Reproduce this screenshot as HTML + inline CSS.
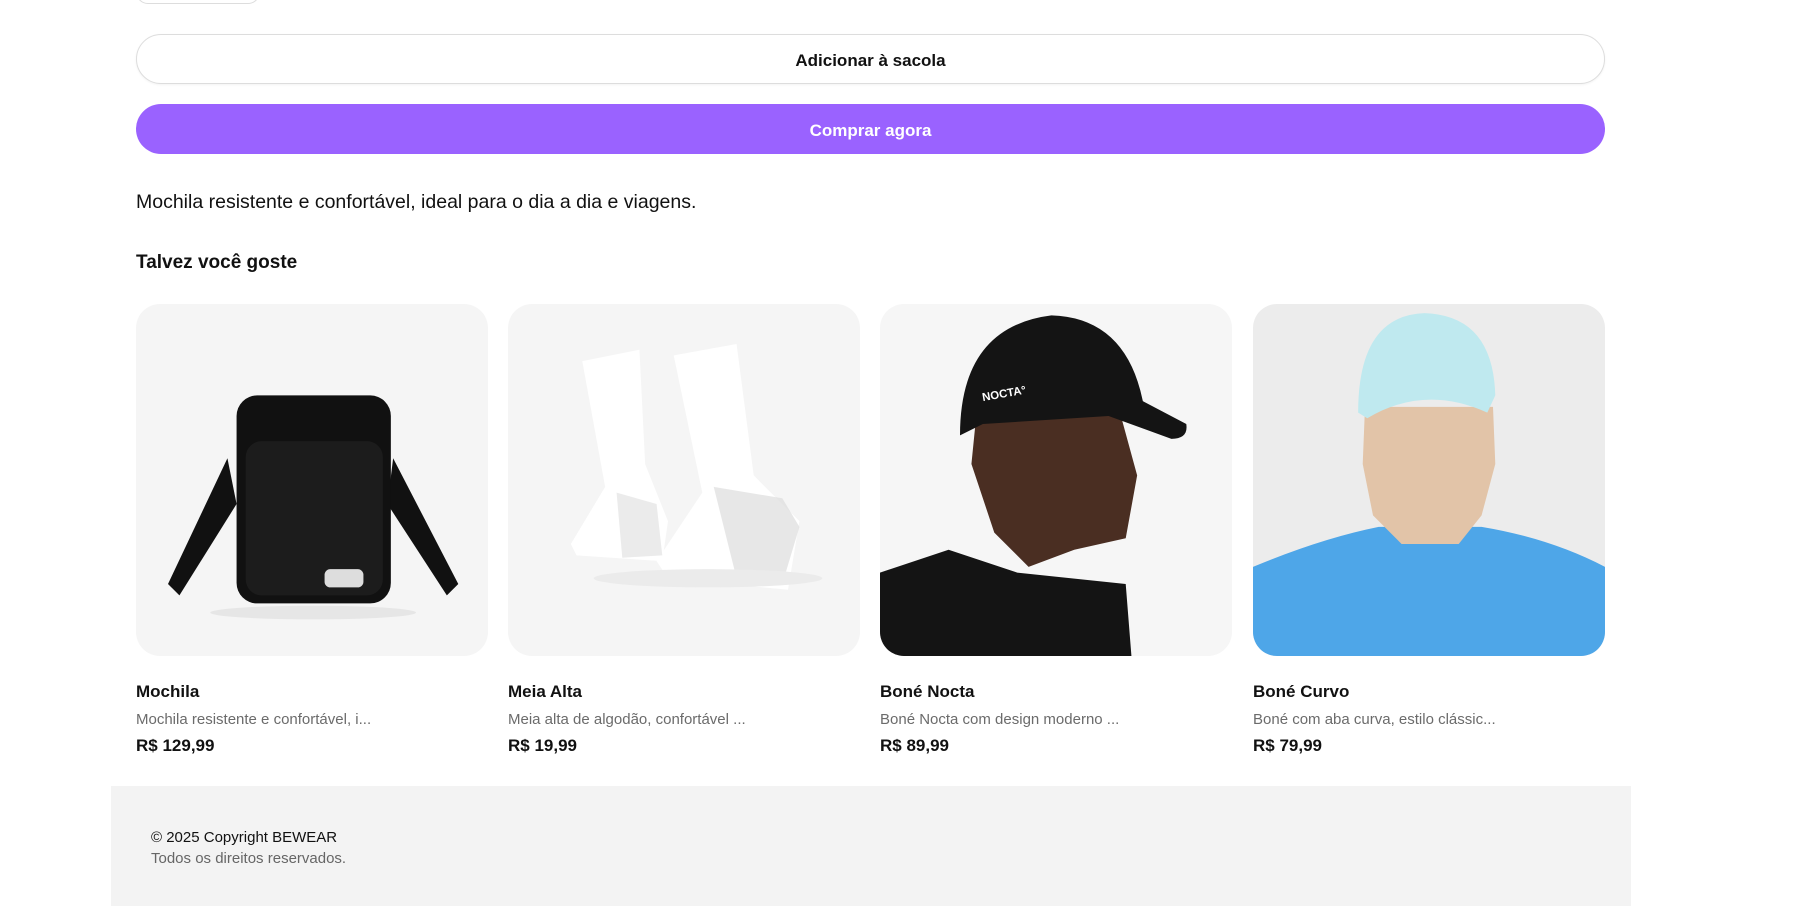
<!DOCTYPE html>
<html><head><meta charset="utf-8"><style>
*{box-sizing:border-box;margin:0;padding:0}
body{width:1793px;height:902px;overflow:hidden;background:#fff;font-family:"Liberation Sans",sans-serif;color:#111;position:relative}
.tiny{position:absolute;left:136px;top:-20px;width:124px;height:24px;border:1px solid #ddd;border-radius:12px}
.btn{position:absolute;left:136px;width:1469px;height:50px;border-radius:25px;display:flex;align-items:center;justify-content:center;font-size:17px;font-weight:bold;padding-top:4px}
.b1{top:34px;border:1px solid #ddd;background:#fff;color:#111;box-shadow:0 1px 2px rgba(0,0,0,.05)}
.b2{top:104px;background:#9a62ff;color:#fff}
.desc{position:absolute;left:136px;top:191px;font-size:19.5px}
.h{position:absolute;left:136px;top:252px;font-size:19px;font-weight:bold}
.card{position:absolute;top:304px;width:352px}
.img{width:352px;height:352px;border-radius:24px;overflow:hidden;background:#f5f5f5}
.img svg{display:block;width:352px;height:352px}
.t{margin-top:26px;font-size:17px;font-weight:bold}
.d{margin-top:9px;font-size:15px;color:#6b6b6b}
.p{margin-top:8px;font-size:17px;font-weight:bold}
.foot{position:absolute;left:111px;top:786px;width:1520px;height:120px;background:#f3f3f3}
.f1{position:absolute;left:40px;top:43px;font-size:15px}
.f2{position:absolute;left:40px;top:64px;font-size:15px;color:#666}
</style></head><body>
<div class="tiny"></div>
<div class="btn b1">Adicionar à sacola</div>
<div class="btn b2">Comprar agora</div>
<div class="desc">Mochila resistente e confortável, ideal para o dia a dia e viagens.</div>
<div class="h">Talvez você goste</div>

<div class="card" style="left:136px"><div class="img"><svg viewBox="0 0 308 308">
<path d="M80 135 L28 245 L38 255 L88 175 Z" fill="#111"/><path d="M225 135 L282 245 L272 255 L220 175 Z" fill="#111"/>
<rect x="88" y="80" width="135" height="182" rx="18" fill="#111"/><rect x="96" y="120" width="120" height="135" rx="14" fill="#1c1c1c"/>
<rect x="165" y="232" width="34" height="16" rx="5" fill="#ddd"/><ellipse cx="155" cy="270" rx="90" ry="6" fill="#e6e6e6"/>
</svg></div><div class="t">Mochila</div><div class="d">Mochila resistente e confortável, i...</div><div class="p">R$ 129,99</div></div>

<div class="card" style="left:508px"><div class="img"><svg viewBox="0 0 308 308">
<path d="M65 50 L115 40 L120 140 L140 190 L135 225 L60 220 L55 210 L85 160 Z" fill="#fff"/>
<path d="M145 45 L200 35 L215 150 L255 190 L245 250 L140 240 L130 225 L170 165 Z" fill="#fff"/>
<path d="M180 160 L240 170 L255 195 L240 245 L200 240 Z" fill="#ddd" opacity=".7"/>
<path d="M95 165 L130 175 L135 220 L100 222 Z" fill="#ddd" opacity=".6"/>
<ellipse cx="175" cy="240" rx="100" ry="8" fill="#ebebeb"/>
</svg></div><div class="t">Meia Alta</div><div class="d">Meia alta de algodão, confortável ...</div><div class="p">R$ 19,99</div></div>

<div class="card" style="left:880px"><div class="img" style="background:#f6f6f6"><svg viewBox="0 0 308 308">
<path d="M0 235 L60 215 L120 235 L215 245 L220 308 L0 308 Z" fill="#141414"/>
<path d="M85 90 L210 95 L225 150 L215 205 L170 215 L130 230 L100 200 L80 140 Z" fill="#4a2e22"/>
<path d="M70 115 Q70 20 150 10 Q215 12 230 85 L268 105 Q270 118 255 118 L200 98 L90 105 Z" fill="#141414"/>
<text x="90" y="85" font-size="10" fill="#fff" font-weight="bold" transform="rotate(-10 90 85)" font-family="Liberation Sans">NOCTA°</text>
</svg></div><div class="t">Boné Nocta</div><div class="d">Boné Nocta com design moderno ...</div><div class="p">R$ 89,99</div></div>

<div class="card" style="left:1253px"><div class="img" style="background:#ececec"><svg viewBox="0 0 308 308">
<path d="M0 230 Q60 205 110 195 L200 195 Q260 205 308 230 L308 308 L0 308 Z" fill="#4ea6e8"/>
<path d="M98 90 L210 90 L212 140 L200 185 L180 210 L130 210 L105 185 L96 140 Z" fill="#e2c4a8"/>
<path d="M92 95 Q92 10 150 8 Q210 10 212 80 L205 95 Q150 70 100 100 Z" fill="#bfe9ef"/>
</svg></div><div class="t">Boné Curvo</div><div class="d">Boné com aba curva, estilo clássic...</div><div class="p">R$ 79,99</div></div>

<div class="foot"><div class="f1">© 2025 Copyright BEWEAR</div><div class="f2">Todos os direitos reservados.</div></div>
</body></html>
